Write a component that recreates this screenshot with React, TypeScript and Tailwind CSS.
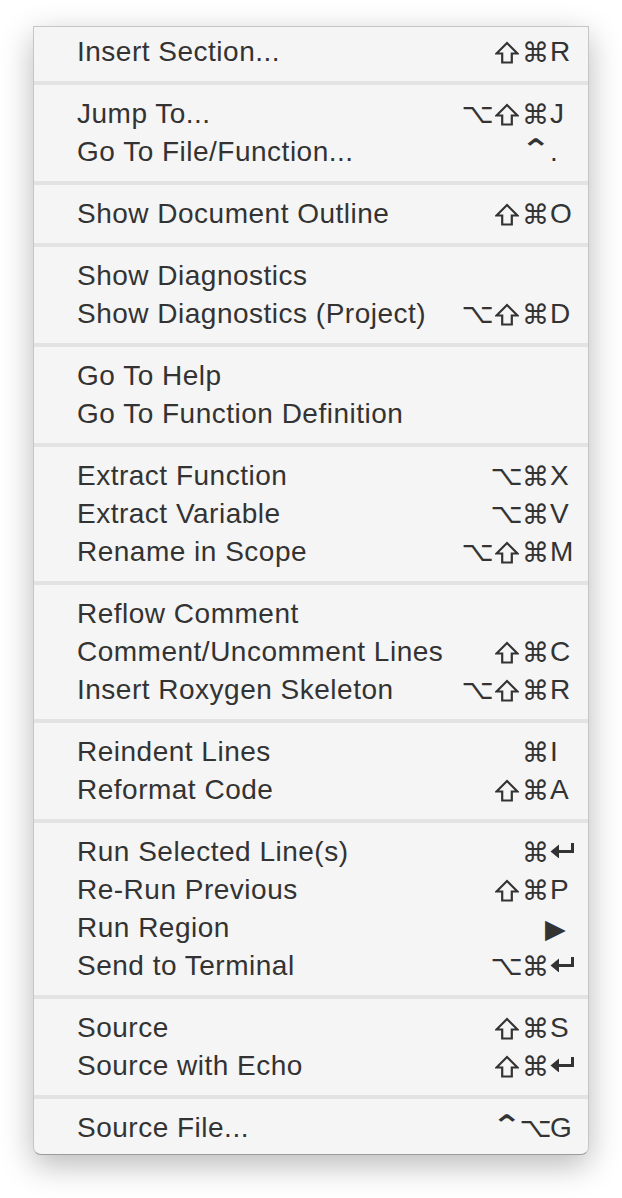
import React from 'react';

type Item = { label: string; mods?: string[]; keyCap?: React.ReactNode };

const Return = () => (
  <svg width="25" height="16" viewBox="0 0 25 16" className="-mt-[5px]">
    <path d="M22.5 1 V9.5 H7" fill="none" stroke="#333" strokeWidth="3" />
    <path d="M0.5 9.5 L9 2.5 L9 16.5 Z" fill="#333" />
  </svg>
);

const Shift = () => (
  <svg width="24" height="23" viewBox="0 0 24 23">
    <path
      d="M12 2 L22.5 12.5 H16.8 V21.5 H7.2 V12.5 H1.5 Z"
      fill="none"
      stroke="#333"
      strokeWidth="2.2"
    />
  </svg>
);

// DejaVu glyphs sized to look like the mac ones
const glyphClass: Record<string, string> = {
  '⌥': "text-[28px]",
  '⌘': "text-[27px]",
  '⌃': "text-[28px] scale-x-[1.3] -mt-[4px] font-bold",
};

const groups: Item[][] = [
  [{ label: 'Insert Section...', mods: ['⇧', '⌘'], keyCap: 'R' }],
  [
    { label: 'Jump To...', mods: ['⌥', '⇧', '⌘'], keyCap: 'J' },
    { label: 'Go To File/Function...', mods: ['⌃'], keyCap: '.' },
  ],
  [{ label: 'Show Document Outline', mods: ['⇧', '⌘'], keyCap: 'O' }],
  [
    { label: 'Show Diagnostics' },
    { label: 'Show Diagnostics (Project)', mods: ['⌥', '⇧', '⌘'], keyCap: 'D' },
  ],
  [{ label: 'Go To Help' }, { label: 'Go To Function Definition' }],
  [
    { label: 'Extract Function', mods: ['⌥', '⌘'], keyCap: 'X' },
    { label: 'Extract Variable', mods: ['⌥', '⌘'], keyCap: 'V' },
    { label: 'Rename in Scope', mods: ['⌥', '⇧', '⌘'], keyCap: 'M' },
  ],
  [
    { label: 'Reflow Comment' },
    { label: 'Comment/Uncomment Lines', mods: ['⇧', '⌘'], keyCap: 'C' },
    { label: 'Insert Roxygen Skeleton', mods: ['⌥', '⇧', '⌘'], keyCap: 'R' },
  ],
  [
    { label: 'Reindent Lines', mods: ['⌘'], keyCap: 'I' },
    { label: 'Reformat Code', mods: ['⇧', '⌘'], keyCap: 'A' },
  ],
  [
    { label: 'Run Selected Line(s)', mods: ['⌘'], keyCap: <Return /> },
    { label: 'Re-Run Previous', mods: ['⇧', '⌘'], keyCap: 'P' },
    {
      label: 'Run Region',
      keyCap: <span className="-ml-[5px] font-['DejaVu_Sans',sans-serif] text-[27px] leading-none">▶</span>,
    },
    { label: 'Send to Terminal', mods: ['⌥', '⌘'], keyCap: <Return /> },
  ],
  [
    { label: 'Source', mods: ['⇧', '⌘'], keyCap: 'S' },
    { label: 'Source with Echo', mods: ['⇧', '⌘'], keyCap: <Return /> },
  ],
  [{ label: 'Source File...', mods: ['⌃', '⌥'], keyCap: 'G' }],
];

const Row: React.FC<{ item: Item }> = ({ item }) => (
  <div className="flex h-[38px] items-center pl-[43px]">
    <span className="flex-1 truncate">{item.label}</span>
    <div className="flex items-center justify-end font-['DejaVu_Sans',sans-serif] leading-none tracking-normal">
      {(item.mods ?? []).map((m, i) => (
        <span key={i} className="flex w-[29px] items-center justify-center">
          {m === '⇧' ? <Shift /> : <span className={`inline-block ${glyphClass[m]}`}>{m}</span>}
        </span>
      ))}
    </div>
    <span className="flex w-[38px] items-center">{item.keyCap}</span>
  </div>
);

const App: React.FC = () => {
  return (
    <div className="h-[1198px] w-full overflow-hidden bg-white pl-[33px] pt-[26px]">
      <div className="w-[556px] rounded-b-[8px] border border-[#c6c6c6] border-b-[#9c9c9c] bg-[#f5f5f5] pb-[7px] pt-[6px] font-['Liberation_Sans',Arial,sans-serif] text-[28px] tracking-[0.5px] text-[#333] shadow-[0_10px_32px_rgba(0,0,0,0.28)]">
        {groups.map((g, gi) => (
          <div key={gi}>
            {gi > 0 && (
              <div className="py-[10px]">
                <div className="h-[4px] bg-[#e3e3e3]" />
              </div>
            )}
            {g.map((item, i) => (
              <Row key={i} item={item} />
            ))}
          </div>
        ))}
      </div>
    </div>
  );
};

export default App;
